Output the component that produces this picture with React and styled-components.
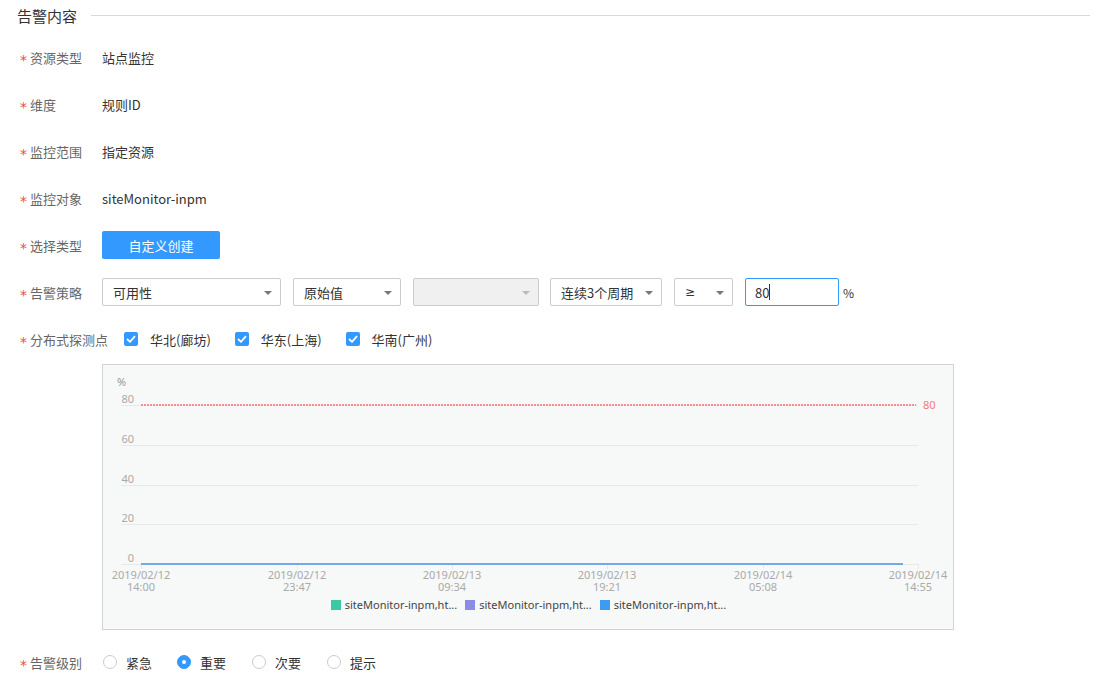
import * as React from 'react';
import styled, { createGlobalStyle } from 'styled-components';

const Global = createGlobalStyle`
  body {
    margin: 0;
    background: #fff;
    font-family: "Noto Sans CJK SC", "Noto Sans", sans-serif;
  }
`;

const BLUE = '#3399ff';

const Page = styled.div`
  width: 1099px;
  height: 692px;
  overflow: hidden;
  padding: 0 9px 0 20px;
  box-sizing: border-box;
`;

const Header = styled.div`
  display: flex;
  align-items: center;
  height: 30px;
  margin-left: -3px;
  gap: 14px;
  font-size: 15px;
  color: #333;
`;

const Rule = styled.div`
  flex: 1;
  height: 1px;
  background: #d9d9d9;
`;

const Form = styled.div`
  padding-top: 13px;
`;

const Row = styled.div`
  display: flex;
  align-items: center;
  height: 28px;
  margin-bottom: ${p => p.$mb ?? 19}px;
`;

const Label = styled.div`
  width: 82px;
  flex: none;
  font-size: 13px;
  color: #666;
  white-space: nowrap;
  &::before {
    content: '*';
    color: #f5474a;
    display: inline-block;
    position: relative;
    top: 2px;
    width: 10px;
    font-family: "DejaVu Sans", sans-serif;
    font-size: 14px;
  }
`;

const Value = styled.div`
  font-size: 13px;
  color: #333;
`;

const Button = styled.button`
  width: 118px;
  height: 28px;
  border: none;
  border-radius: 2px;
  background: ${BLUE};
  color: #fff;
  font-family: inherit;
  font-size: 13px;
  padding: 0;
`;

const Select = styled.div`
  position: relative;
  box-sizing: border-box;
  flex: none;
  width: ${p => p.$w}px;
  height: 28px;
  margin-right: ${p => p.$mr ?? 12}px;
  border: 1px solid #ccc;
  border-radius: 2px;
  background: ${p => (p.$disabled ? '#f0f0f0' : '#fff')};
  font-size: 13px;
  color: #333;
  display: flex;
  align-items: center;
  padding-left: 10px;
  &::after {
    content: '';
    position: absolute;
    right: 8px;
    top: 12px;
    border-left: 4px solid transparent;
    border-right: 4px solid transparent;
    border-top: 4px solid ${p => (p.$disabled ? '#bbb' : '#777')};
  }
`;

const Sym = styled.span`
  font-family: "DejaVu Sans", sans-serif;
  font-size: 12px;
`;

const Input = styled.div`
  box-sizing: border-box;
  flex: none;
  width: 94px;
  height: 28px;
  border: 1px solid ${BLUE};
  border-radius: 2px;
  display: flex;
  align-items: center;
  padding-left: 9px;
  font-size: 13px;
  color: #333;
`;

const Caret = styled.span`
  display: inline-block;
  width: 1px;
  height: 16px;
  background: #333;
`;

const Unit = styled.span`
  margin-left: 4px;
  font-size: 12px;
  color: #333;
`;

const CheckItem = styled.label`
  display: flex;
  align-items: center;
  margin-left: ${p => p.$ml}px;
  font-size: 13px;
  color: #333;
`;

const Box = styled.span`
  width: 14px;
  height: 14px;
  border-radius: 2px;
  background: ${BLUE};
  display: inline-flex;
  align-items: center;
  justify-content: center;
  margin-right: 12px;
`;

const ChartBox = styled.div`
  margin-left: 82px;
  width: 852px;
  height: 266px;
  box-sizing: border-box;
  border: 1px solid #d3d3d3;
  background: #f7f8f8;
  margin-bottom: 18px;
`;

const Legend = styled.div`
  display: flex;
  justify-content: center;
  gap: 8px;
  margin-left: 1px;
  font-family: "Noto Sans", sans-serif;
  font-size: 11px;
  color: #444;
`;

const LegendItem = styled.div`
  display: flex;
  align-items: center;
  gap: 4px;
  &::before {
    content: '';
    width: 10px;
    height: 10px;
    background: ${p => p.$c};
  }
`;

const RadioItem = styled.label`
  display: flex;
  align-items: center;
  flex: none;
  width: 75px;
  font-size: 13px;
  color: #333;
`;

const Radio = styled.span`
  box-sizing: border-box;
  width: 14px;
  height: 14px;
  border-radius: 50%;
  margin-left: ${p => p.$ml ?? 0}px;
  margin-right: 9px;
  border: 1px solid ${p => (p.$on ? BLUE : '#ccc')};
  background: ${p => (p.$on ? BLUE : '#fff')};
  display: inline-flex;
  align-items: center;
  justify-content: center;
  &::after {
    content: '';
    width: 4px;
    height: 4px;
    border-radius: 50%;
    background: ${p => (p.$on ? '#fff' : 'transparent')};
  }
`;

const Check = () => (
  <svg width="10" height="8" viewBox="0 0 10 8">
    <path d="M1 4 L4 6.8 L9 1.2" fill="none" stroke="#fff" strokeWidth="1.8" />
  </svg>
);

const yTicks = [
  { v: 80, y: 40 },
  { v: 60, y: 80 },
  { v: 40, y: 120 },
  { v: 20, y: 159 },
  { v: 0, y: 199 },
];

const xTicks = [
  { x: 38, d: '2019/02/12', t: '14:00' },
  { x: 194, d: '2019/02/12', t: '23:47' },
  { x: 349, d: '2019/02/13', t: '09:34' },
  { x: 504, d: '2019/02/13', t: '19:21' },
  { x: 660, d: '2019/02/14', t: '05:08' },
  { x: 815, d: '2019/02/14', t: '14:55' },
];

const Chart = () => (
  <svg width="850" height="232" style={{ display: 'block' }} fontFamily="Noto Sans, sans-serif" fontSize="11">
    <text x="14" y="21" fill="#999">%</text>
    {yTicks.map(t => (
      <g key={t.v}>
        <line x1="18" x2="815" y1={t.y + 0.5} y2={t.y + 0.5} stroke="#e8eaea" />
        <text x="31" y={t.y - 2} textAnchor="end" fill="#aaa">{t.v}</text>
      </g>
    ))}
    {xTicks.map(t => (
      <g key={t.x}>
        <line x1={t.x + 0.5} x2={t.x + 0.5} y1="199" y2="204" stroke="#e8eaea" />
        <text x={t.x} y="214" textAnchor="middle" fill="#aaa">{t.d}</text>
        <text x={t.x} y="226" textAnchor="middle" fill="#aaa">{t.t}</text>
      </g>
    ))}
    <line x1="38" x2="813" y1="40" y2="40" stroke="#f59090" strokeWidth="2" strokeDasharray="2 1" />
    <text x="820" y="44" fill="#f57a7a">80</text>
    <line x1="38" x2="800" y1="199" y2="199" stroke="#4a90e2" strokeWidth="1.5" />
  </svg>
);

export default function App() {
  return (
    <Page>
      <Global />
      <Header>
        告警内容
        <Rule />
      </Header>
      <Form>
        <Row><Label>资源类型</Label><Value>站点监控</Value></Row>
        <Row><Label>维度</Label><Value>规则ID</Value></Row>
        <Row><Label>监控范围</Label><Value>指定资源</Value></Row>
        <Row><Label>监控对象</Label><Value>siteMonitor-inpm</Value></Row>
        <Row><Label>选择类型</Label><Button>自定义创建</Button></Row>
        <Row>
          <Label>告警策略</Label>
          <Select $w={179}>可用性</Select>
          <Select $w={108}>原始值</Select>
          <Select $w={126} $mr={11} $disabled />
          <Select $w={112}>连续3个周期</Select>
          <Select $w={59}><Sym>≥</Sym></Select>
          <Input>80<Caret /></Input>
          <Unit>%</Unit>
        </Row>
        <Row $mb={11}>
          <Label>分布式探测点</Label>
          <CheckItem $ml={22}><Box><Check /></Box>华北(廊坊)</CheckItem>
          <CheckItem $ml={24}><Box><Check /></Box>华东(上海)</CheckItem>
          <CheckItem $ml={24}><Box><Check /></Box>华南(广州)</CheckItem>
        </Row>
        <ChartBox>
          <Chart />
          <Legend>
            <LegendItem $c="#3cc8a0">siteMonitor-inpm,ht...</LegendItem>
            <LegendItem $c="#8c8ce6">siteMonitor-inpm,ht...</LegendItem>
            <LegendItem $c="#3d9bf0">siteMonitor-inpm,ht...</LegendItem>
          </Legend>
        </ChartBox>
        <Row>
          <Label>告警级别</Label>
          <RadioItem><Radio $ml={1} />紧急</RadioItem>
          <RadioItem><Radio $on />重要</RadioItem>
          <RadioItem><Radio />次要</RadioItem>
          <RadioItem><Radio />提示</RadioItem>
        </Row>
      </Form>
    </Page>
  );
}
